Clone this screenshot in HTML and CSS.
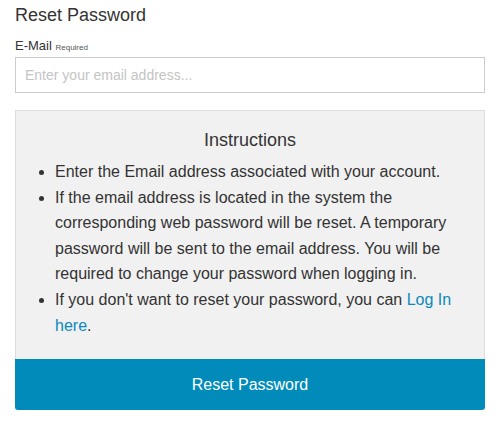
FILE: index.html
```html
<!DOCTYPE html>
<html>
<head>
<meta charset="utf-8">
<link rel="stylesheet" href="styles.css">
</head>
<body>
<div class="page">
  <h1 class="title">Reset Password</h1>
  <label class="label" for="email">E-Mail <span class="req">Required</span></label>
  <input class="input" id="email" type="text" placeholder="Enter your email address...">
  <div class="panel">
    <h2 class="panel-title">Instructions</h2>
    <ul class="list">
      <li>Enter the Email address associated with your account.</li>
      <li>If the email address is located in the system the corresponding web password will be reset. A temporary password will be sent to the email address. You will be required to change your password when logging in.</li>
      <li>If you don't want to reset your password, you can <a class="link" href="#">Log In here</a>.</li>
    </ul>
  </div>
  <button class="btn" type="button">Reset Password</button>
</div>
</body>
</html>
```
FILE: styles.css
```css
html, body {
  margin: 0;
  padding: 0;
  background: #fff;
}
body {
  font-family: "Liberation Sans", Arial, sans-serif;
  color: #333;
}
.page {
  width: 470px;
  padding: 4px 15px 0;
  display: flex;
  flex-direction: column;
}
.title {
  font-size: 18px;
  font-weight: normal;
  line-height: 22px;
  margin: 0 0 12px;
  color: #333;
}
.label {
  font-size: 13px;
  line-height: 15px;
  color: #333;
  margin-bottom: 2px;
}
.req {
  font-size: 8px;
  color: #555;
}
.input {
  box-sizing: border-box;
  width: 470px;
  height: 36px;
  border: 1px solid #ccc;
  padding: 0 9px;
  font-family: "Liberation Sans", Arial, sans-serif;
  font-size: 14px;
  margin: 0;
  outline: none;
}
.input::placeholder {
  color: #c4c4c4;
}
.panel {
  margin-top: 17px;
  box-sizing: border-box;
  background: #f1f1f1;
  border: 1px solid #ddd;
  border-bottom: none;
  padding: 18px 15px 16px;
  height: 249px;
}
.panel-title {
  font-size: 18px;
  font-weight: normal;
  text-align: center;
  margin: 0 0 8px;
  line-height: 22px;
  color: #333;
}
.list {
  margin: 0;
  padding-left: 24px;
  font-size: 16px;
  line-height: 25.6px;
  color: #333;
}
.link {
  color: #0a8ab8;
  text-decoration: none;
}
.btn {
  height: 51px;
  width: 470px;
  border: none;
  border-radius: 0 0 3px 3px;
  background: #008bba;
  color: #fff;
  font-family: "Liberation Sans", Arial, sans-serif;
  font-size: 16px;
  margin: 0;
  padding: 0;
}
```
